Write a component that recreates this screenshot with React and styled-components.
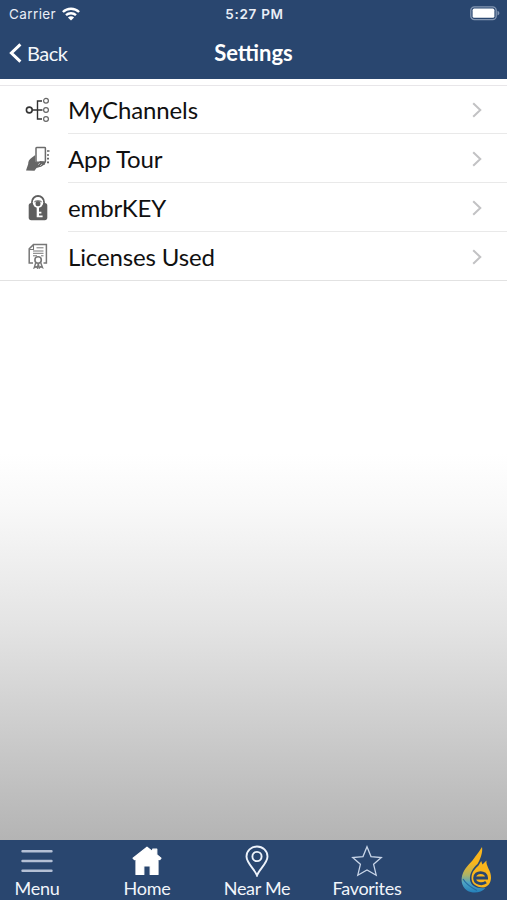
import React from "react";
import styled, { createGlobalStyle } from "styled-components";

const GlobalStyle = createGlobalStyle`
  * { box-sizing: border-box; }
  body { margin: 0; overflow: hidden; }
`;

const Screen = styled.div`
  display: flex;
  flex-direction: column;
  width: 507px;
  height: 900px;
  overflow: hidden;
  font-family: Lato, sans-serif;
  background: #fff;
`;

const Header = styled.header`
  height: 79px;
  flex-shrink: 0;
  color: #fff;
  background: #29466f;
`;

const StatusBar = styled.div`
  display: grid;
  grid-template-columns: 1fr auto 1fr;
  align-items: center;
  height: 27px;
  padding: 0 7px 0 9px;
  font-family: Inter, sans-serif;
  font-size: 13.5px;
  color: #e9eef6;
`;

const Carrier = styled.div`
  display: flex;
  align-items: center;
  gap: 6px;
  letter-spacing: 0.4px;
`;

const Clock = styled.div`
  font-weight: 600;
  letter-spacing: 0.7px;
`;

const BatterySlot = styled.div`
  display: flex;
  justify-content: flex-end;
`;

const NavBar = styled.div`
  display: grid;
  grid-template-columns: 1fr auto 1fr;
  align-items: center;
  height: 52px;
  padding: 0 9px;
`;

const BackButton = styled.button`
  display: flex;
  align-items: center;
  gap: 5px;
  padding: 0;
  border: 0;
  background: none;
  color: #f4f7fb;
  font: 400 20px/24px Lato, sans-serif;
  letter-spacing: -0.5px;
`;

const Title = styled.h1`
  margin: 0;
  font-size: 22px;
  line-height: 26px;
  font-weight: 700;
`;

const Content = styled.main`
  flex: 1;
  padding-top: 6px;
  background: linear-gradient(to bottom, #fff 375px, #f8f8f8 430px, #e4e4e4 545px, #b4b4b4 761px);
`;

const List = styled.ul`
  margin: 0;
  padding: 0;
  list-style: none;
  border-top: 1px solid #e8e6e9;
  border-bottom: 1px solid #e2e2e2;
  background: #fff;
`;

const Row = styled.li`
  display: flex;
  height: ${(p) => (p.$first || p.$last ? 48 : 49)}px;
`;

const RowIcon = styled.div`
  display: flex;
  align-items: center;
  justify-content: center;
  width: 68px;
  padding-left: 7px;
`;

const RowBody = styled.div`
  display: flex;
  flex: 1;
  align-items: center;
  justify-content: space-between;
  padding: ${(p) => (p.$first ? 0 : 2)}px 25px 0 0;
  border-bottom: ${(p) => (p.$last ? "0" : "1px solid #e9e9e9")};
  color: #101010;
  font-size: 24px;
  line-height: 30px;
  letter-spacing: -0.13px;
`;

const RowLabel = styled.span`
  display: block;
`;

const TabBar = styled.nav`
  display: grid;
  grid-template-columns: repeat(5, 74px);
  column-gap: 36px;
  height: 60px;
  flex-shrink: 0;
  background: #29466f;
`;

const Tab = styled.div`
  display: flex;
  flex-direction: column;
  align-items: center;
  padding-top: 4px;
  color: #f1f5fb;
  font-size: 18px;
  line-height: 22px;
  letter-spacing: -0.3px;
  white-space: nowrap;
`;

const TabIcon = styled.div`
  display: flex;
  align-items: center;
  justify-content: center;
  height: 33px;
`;

const LogoTab = styled.div`
  display: flex;
  justify-content: center;
  padding-top: 7px;
`;

const WifiIcon = () => (
  <svg width="18" height="14" viewBox="0 0 18 14" fill="none" stroke="#fff" strokeWidth="2.4">
    <path d="M0.9 5C5.4 0.6 12.6 0.6 17.1 5" />
    <path d="M4 8.2C6.8 5.6 11.2 5.6 14 8.2" />
    <path d="M9 13.6L5.9 10.5C7.6 8.9 10.4 8.9 12.1 10.5Z" fill="#fff" stroke="none" />
  </svg>
);

const BatteryIcon = () => (
  <svg width="30" height="15" viewBox="0 0 30 15">
    <rect x="0.8" y="0.8" width="25.4" height="12.8" rx="3.6" fill="none" stroke="#8497b3" strokeWidth="1.3" />
    <rect x="2.6" y="2.6" width="21.8" height="9.2" rx="1.6" fill="#fff" />
    <path d="M27.5 4.8C30 6 30 8.5 27.5 9.6Z" fill="#8497b3" />
  </svg>
);

const BackChevron = () => (
  <svg width="13" height="20" viewBox="0 0 13 20" fill="none" stroke="#fff" strokeWidth="3">
    <path d="M11.4 1.4L2.4 10L11.4 18.6" />
  </svg>
);

const Chevron = () => (
  <svg width="10" height="16" viewBox="0 0 10 16" fill="none" stroke="#c2c2c4" strokeWidth="2">
    <path d="M1.2 1.2L8.3 8L1.2 14.8" />
  </svg>
);

const ChannelsIcon = () => (
  <svg width="26" height="26" viewBox="0 0 26 26" fill="none" stroke="#333" strokeWidth="1.4">
    <circle cx="4.3" cy="13" r="2.9" strokeWidth="1.6" />
    <path d="M7.3 13H17.5M17 4H12.5V22H17" />
    <g stroke="#666" strokeWidth="1.2">
      <circle cx="21" cy="3.8" r="2.4" />
      <circle cx="21" cy="13" r="2.4" />
      <circle cx="21" cy="22" r="2.4" />
    </g>
  </svg>
);

const TourIcon = () => (
  <svg width="26" height="26" viewBox="0 0 26 26">
    <path d="M1 24.5L3.2 18Q3 14.5 6 12.2L10.3 9V16L12.5 14.2L14 16.5L17.5 16L19.3 17.8L16.5 20.5L11.5 22L9.5 24.8Z" fill="#666" />
    <rect x="11" y="1.5" width="9.4" height="14.7" rx="0.7" fill="#fff" stroke="#6b6b6b" strokeWidth="1.5" />
    <path d="M10.5 20.5L15 15L20.5 15.8L20 18.5L14 21Z" fill="#666" />
    <path d="M13 18.8L15 17M15 20L17 18" stroke="#ddd" strokeWidth="0.7" />
    <path d="M22 5H24.5M22 9H24M22 12.7H24M22 16.4H24" stroke="#666" strokeWidth="1.7" />
  </svg>
);

const KeyIcon = () => (
  <svg width="22" height="26" viewBox="0 0 22 26">
    <path d="M5 12V7A6 6 0 0 1 17 7V12" fill="none" stroke="#5f5f5f" strokeWidth="1.8" />
    <rect x="1.7" y="8" width="18.6" height="17.2" rx="2.6" fill="#5f5f5f" />
    <circle cx="11" cy="7.6" r="5.2" fill="#fff" />
    <path d="M6.8 7.3C8 4.2 14 4.2 15.2 7.3Z" fill="#8a8a8a" />
    <circle cx="11" cy="8.8" r="2.5" fill="#5f5f5f" />
    <path d="M9.7 12V22.2H15.6V20.4H12V18.6H14.4V16.8H12V12Z" fill="#fff" />
  </svg>
);

const LicenseIcon = () => (
  <svg width="22" height="26" viewBox="0 0 22 26" fill="none" stroke="#777" strokeWidth="1.5">
    <path d="M6 20H2.2V5.8L6.5 1.6H19.4V20H16.5" />
    <path d="M2.4 6.5H6.5V2" strokeWidth="1.1" />
    <path d="M9.5 4.8H16.5M6 8H16.5M6 10.3H16.5M6 12.8H10M14 12.8H16.5" strokeWidth="1" />
    <circle cx="11.1" cy="17" r="3.2" strokeWidth="1.6" />
    <path d="M8.8 19.5L7.2 24.8L9.3 23.7L10.5 25L11.2 20.5L12.3 25L13.7 23.7L15.5 24.6L13.7 19.5" strokeWidth="1.4" />
  </svg>
);

const MenuIcon = () => (
  <svg width="34" height="26" viewBox="0 0 34 26" stroke="#b4c0d5" strokeWidth="2.4" strokeLinecap="round">
    <path d="M2.5 3.3H31.5M2.5 13H31.5M2.5 22.7H31.5" />
  </svg>
);

const HomeIcon = () => (
  <svg width="30" height="30" viewBox="0 0 30 30" fill="#fff" stroke="#fff" strokeWidth="1.2" strokeLinejoin="round">
    <path d="M15 1.2L1 12.2L2.4 13.6L4 12.8V28.5H11.8V20H18.2V28.5H26V12.8L27.8 13.6L29 12.2L24.8 8.8V3.2H20.7V5.6Z" />
  </svg>
);

const PinIcon = () => (
  <svg width="24" height="32" viewBox="0 0 24 32" fill="none" stroke="#edf3fb" strokeWidth="1.9">
    <path d="M12 30.5C9.8 24.5 1.5 18 1.5 11.5A10.5 10 0 0 1 22.5 11.5C22.5 18 14.2 24.5 12 30.5Z" />
    <circle cx="12" cy="11.5" r="4.6" />
  </svg>
);

const StarIcon = () => (
  <svg width="32" height="32" viewBox="0 0 32 32" fill="none" stroke="#c8d5e8" strokeWidth="1.3">
    <path d="M16 1.8L20 11.6L30.3 12.5L22.6 19.3L25.2 30.2L16 25L6.8 30.2L9.4 19.3L1.7 12.5L12 11.6Z" />
  </svg>
);

const EmberLogo = () => (
  <svg width="34" height="48" viewBox="0 0 34 48">
    <defs>
      <linearGradient id="flame" x1="0" y1="0" x2="0" y2="1">
        <stop offset="0.35" stopColor="#f9b51c" />
        <stop offset="0.62" stopColor="#a9b36a" />
        <stop offset="0.78" stopColor="#4fa5c4" />
        <stop offset="1" stopColor="#2380bb" />
      </linearGradient>
    </defs>
    <path d="M22 0C23 5 20.5 12 17.5 17C13 21 9.5 26 10 33C11 39 17 42 25.5 41C21 46 13 47 7 43.5C1 39 .5 32 3 26C6 19 12 15 15 10Q19 5 22 0Z" fill="url(#flame)" />
    <path d="M18.5 18.5L21.2 14L22.5 17.5L26.5 13.5C25.5 19 31.5 24 31 31C30.8 36 28 40 23 40.5C16 40 11.5 37 11.5 31C11.5 25 15 22 18.5 18.5Z" fill="#f9b51c" />
    <path d="M3 32C6 37 10 40 17 43.5" fill="none" stroke="#226ba5" strokeWidth="1.2" />
    <path d="M15 31H26.6C26.6 23.7 14.6 23.7 14.6 31C14.6 37.3 22.5 37.8 26 35.2" fill="none" stroke="#29466f" strokeWidth="2.8" />
  </svg>
);

const items = [
  { label: "MyChannels", icon: <ChannelsIcon /> },
  { label: "App Tour", icon: <TourIcon /> },
  { label: "embrKEY", icon: <KeyIcon /> },
  { label: "Licenses Used", icon: <LicenseIcon /> },
];

const tabs = [
  { label: "Menu", icon: <MenuIcon /> },
  { label: "Home", icon: <HomeIcon /> },
  { label: "Near Me", icon: <PinIcon /> },
  { label: "Favorites", icon: <StarIcon /> },
];

export default function App() {
  return (
    <Screen>
      <GlobalStyle />
      <Header>
        <StatusBar>
          <Carrier>
            Carrier
            <WifiIcon />
          </Carrier>
          <Clock>5:27 PM</Clock>
          <BatterySlot>
            <BatteryIcon />
          </BatterySlot>
        </StatusBar>
        <NavBar>
          <BackButton>
            <BackChevron />
            Back
          </BackButton>
          <Title>Settings</Title>
        </NavBar>
      </Header>
      <Content>
        <List>
          {items.map((item, i) => {
            const first = i === 0;
            const last = i === items.length - 1;
            return (
              <Row key={item.label} $first={first} $last={last}>
                <RowIcon>{item.icon}</RowIcon>
                <RowBody $first={first} $last={last}>
                  <RowLabel>{item.label}</RowLabel>
                  <Chevron />
                </RowBody>
              </Row>
            );
          })}
        </List>
      </Content>
      <TabBar>
        {tabs.map((tab) => (
          <Tab key={tab.label}>
            <TabIcon>{tab.icon}</TabIcon>
            {tab.label}
          </Tab>
        ))}
        <LogoTab>
          <EmberLogo />
        </LogoTab>
      </TabBar>
    </Screen>
  );
}
